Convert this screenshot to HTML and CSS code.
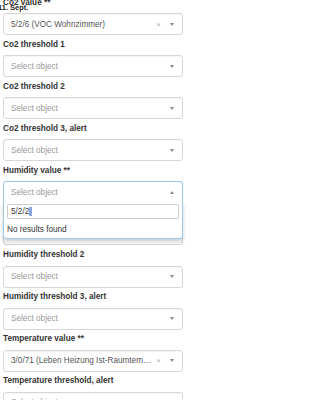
FILE: index.html
```html
<!DOCTYPE html>
<html lang="en">
<head>
    <meta charset="UTF-8">
    <meta name="viewport" content="width=device-width, initial-scale=1.0">
    <title>Sensor settings</title>
    <link rel="stylesheet" href="styles.css">
</head>
<body>
    <span class="date-tag">11. Sept.</span>
    <form class="settings">
        <div class="field">
            <label>Co2 value **</label>
            <div class="select">
                <span class="value">5/2/6 (VOC Wohnzimmer)</span>
                <span class="clear">×</span>
                <span class="arrow"></span>
            </div>
        </div>
        <div class="field">
            <label>Co2 threshold 1</label>
            <div class="select">
                <span class="value placeholder">Select object</span>
                <span class="arrow"></span>
            </div>
        </div>
        <div class="field">
            <label>Co2 threshold 2</label>
            <div class="select">
                <span class="value placeholder">Select object</span>
                <span class="arrow"></span>
            </div>
        </div>
        <div class="field">
            <label>Co2 threshold 3, alert</label>
            <div class="select">
                <span class="value placeholder">Select object</span>
                <span class="arrow"></span>
            </div>
        </div>
        <div class="field">
            <label>Humidity value **</label>
            <div class="select-wrap">
                <div class="select open">
                    <span class="value placeholder">Select object</span>
                    <span class="arrow up"></span>
                </div>
                <div class="dropdown">
                    <div class="search">5/2/2<span class="caret"></span></div>
                    <div class="no-results">No results found</div>
                </div>
            </div>
        </div>
        <div class="field">
            <label>Humidity threshold 1</label>
            <div class="select">
                <span class="value placeholder">Select object</span>
                <span class="arrow"></span>
            </div>
        </div>
        <div class="field">
            <label>Humidity threshold 2</label>
            <div class="select">
                <span class="value placeholder">Select object</span>
                <span class="arrow"></span>
            </div>
        </div>
        <div class="field">
            <label>Humidity threshold 3, alert</label>
            <div class="select">
                <span class="value placeholder">Select object</span>
                <span class="arrow"></span>
            </div>
        </div>
        <div class="field">
            <label>Temperature value **</label>
            <div class="select">
                <span class="value">3/0/71 (Leben Heizung Ist-Raumtemperatur)</span>
                <span class="clear">×</span>
                <span class="arrow"></span>
            </div>
        </div>
        <div class="field">
            <label>Temperature threshold, alert</label>
            <div class="select">
                <span class="value placeholder">Select object</span>
                <span class="arrow"></span>
            </div>
        </div>
    </form>
</body>
</html>
```

FILE: styles.css
```css
*{
    box-sizing: border-box;
}
body{
    margin: 0;
    font-family: "Liberation Sans", Arial, sans-serif;
    font-size: 8.2px;
    color: #333;
    background: #fff;
    overflow: hidden;
}
.date-tag{
    position: absolute;
    left: -2px;
    top: 3px;
    font-size: 7.5px;
    font-weight: bold;
    color: #222;
    z-index: 2;
}
.settings{
    display: flex;
    flex-direction: column;
    width: 180px;
    margin: -5.5px 0 0 3px;
}
.field{
    display: flex;
    flex-direction: column;
    margin-bottom: 1.6px;
}
.field label{
    font-weight: bold;
    line-height: 15px;
    margin-bottom: 3.5px;
    color: #333;
}
.select-wrap{
    position: relative;
}
.select{
    display: flex;
    align-items: center;
    height: 22px;
    padding: 0 6px 0 7px;
    border: 1px solid #d6d6d6;
    border-radius: 3px;
    background: #fff;
    box-shadow: inset 0 1px 1px rgba(0,0,0,.04);
}
.select .value{
    flex: 1;
    white-space: nowrap;
    overflow: hidden;
    text-overflow: ellipsis;
    color: #555;
}
.select .placeholder{
    color: #999;
}
.clear{
    color: #aaa;
    font-size: 8px;
    margin: 0 9px 0 5px;
}
.arrow{
    width: 0;
    height: 0;
    margin-right: 2px;
    border-left: 2.5px solid transparent;
    border-right: 2.5px solid transparent;
    border-top: 3px solid #888;
}
.arrow.up{
    border-top: none;
    border-bottom: 3px solid #888;
}
.select.open{
    border-color: #9ecaed;
    border-bottom-color: #e3e3e3;
    border-radius: 3px 3px 0 0;
    box-shadow: none;
}
.dropdown{
    position: absolute;
    top: 21px;
    left: 0;
    right: 0;
    z-index: 3;
    height: 37px;
    padding: 2px 3px 0;
    background: #fff;
    border: 1px solid #9ecaed;
    border-top: none;
    border-radius: 0 0 3px 3px;
    box-shadow: 0 3px 4px rgba(0,0,0,.18);
}
.search{
    display: flex;
    align-items: center;
    height: 15px;
    padding: 0 3px;
    border: 1px solid #ccc;
    border-radius: 2px;
    color: #333;
}
.caret{
    display: inline-block;
    width: 3px;
    height: 9px;
    background: #8aa6e0;
}
.no-results{
    padding: 4px 0 0 0;
    line-height: 14px;
    color: #333;
}
```
